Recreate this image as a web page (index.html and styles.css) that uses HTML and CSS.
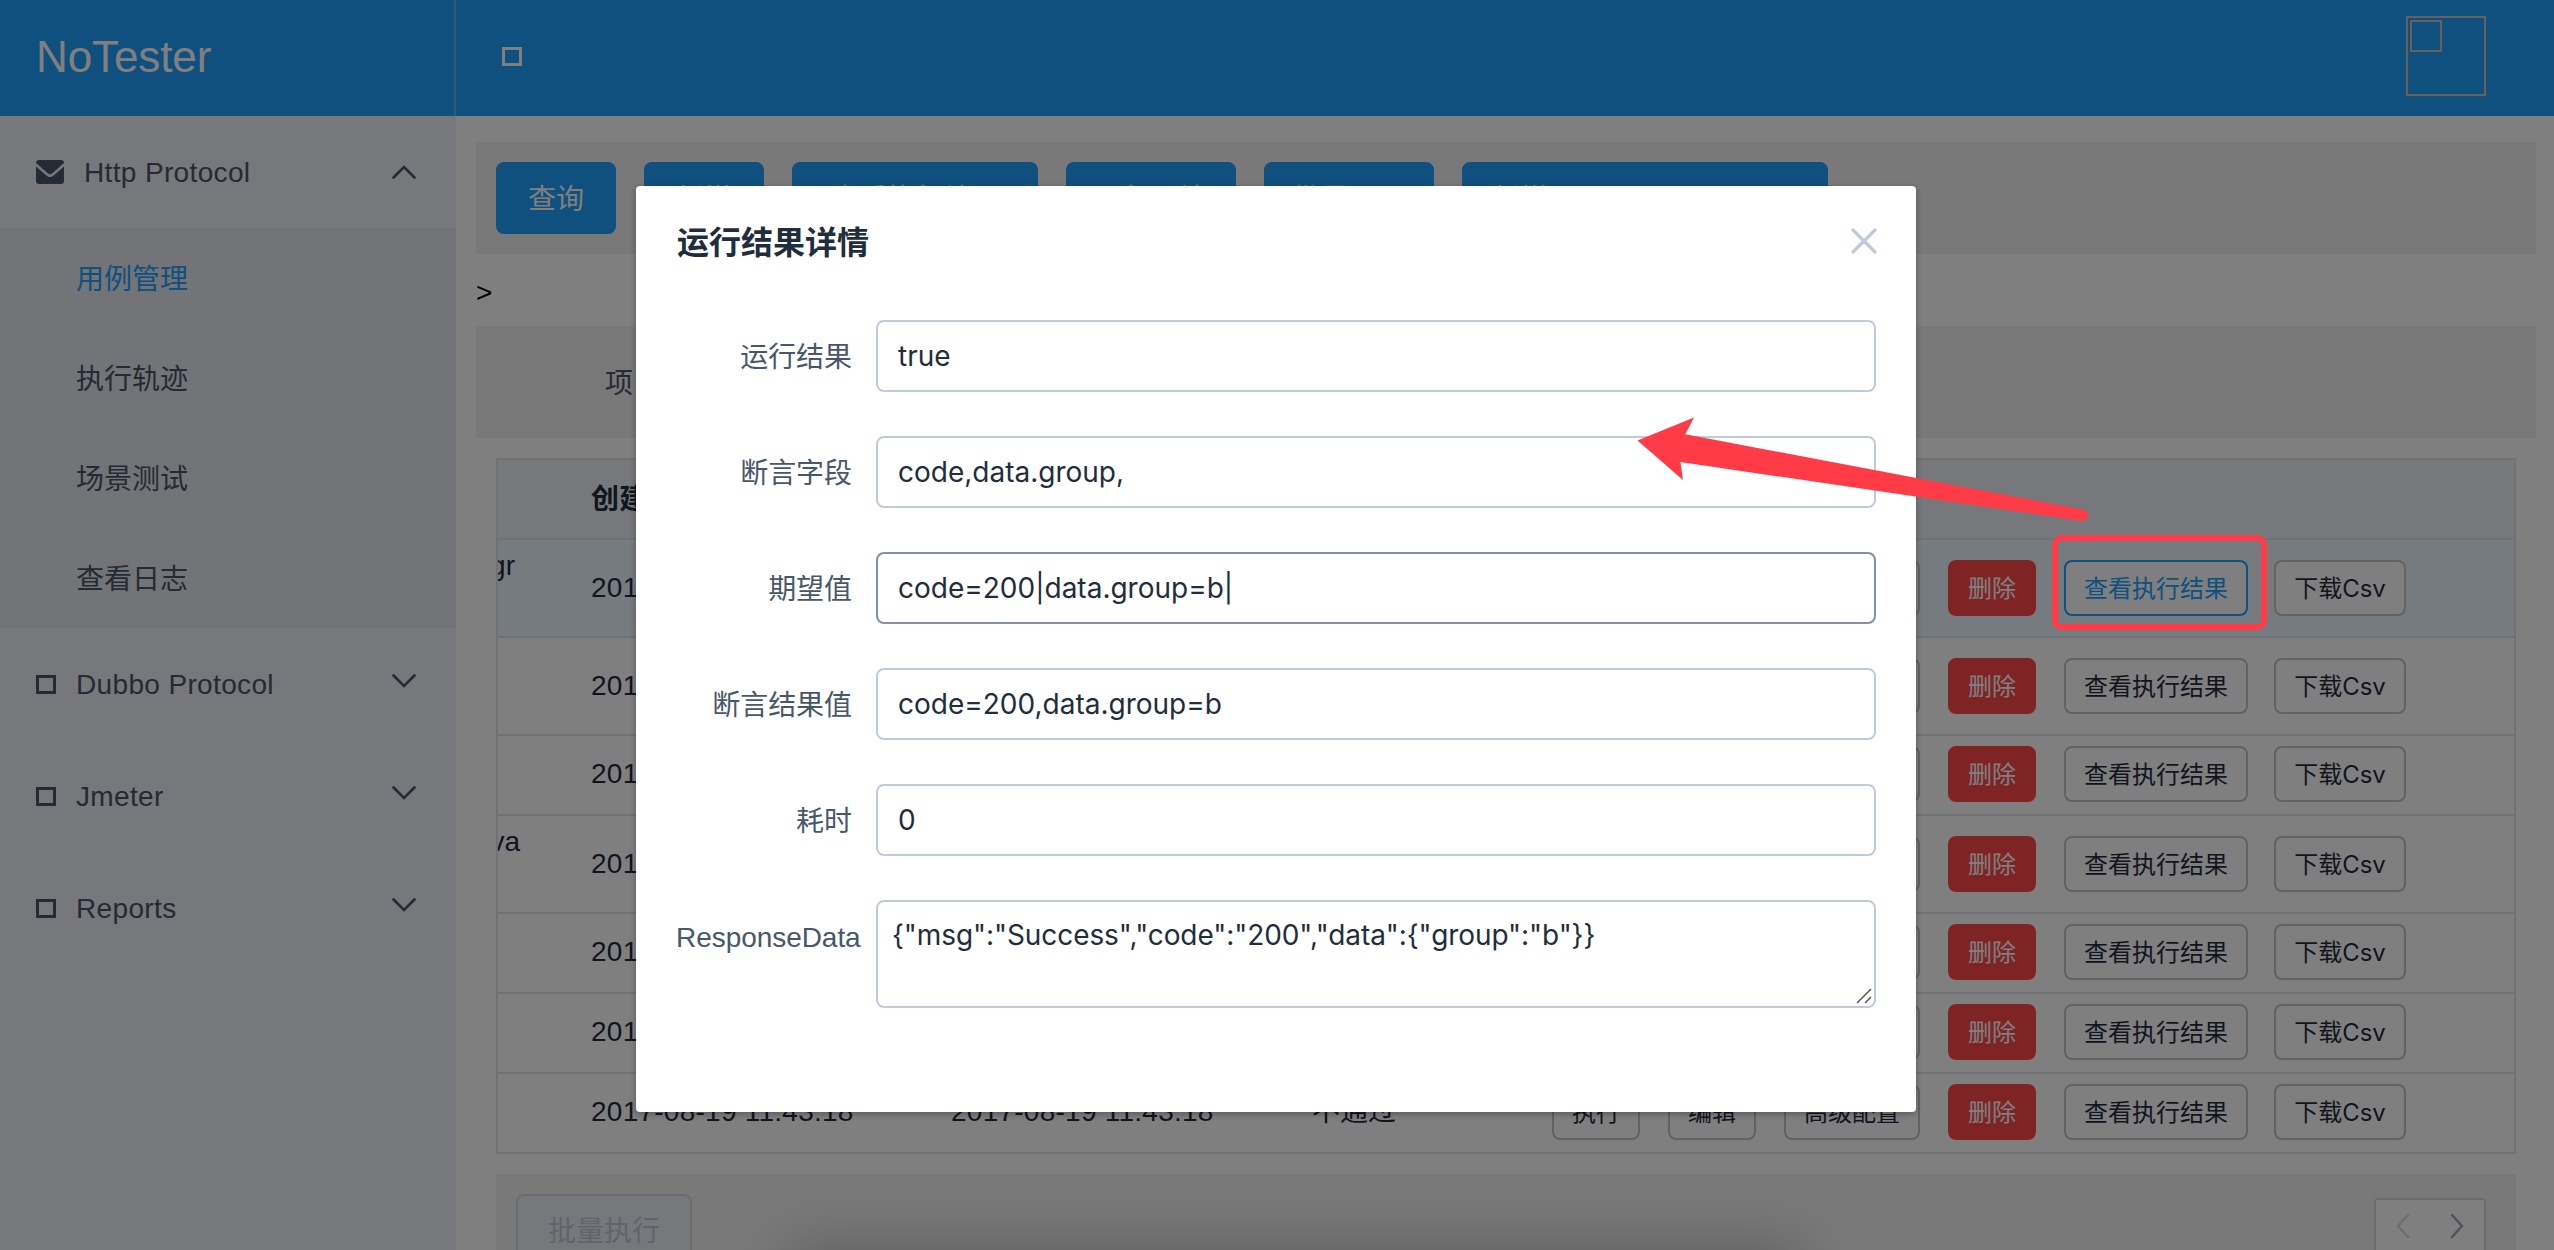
FILE: index.html
```html
<!DOCTYPE html>
<html lang="zh-CN">
<head>
<meta charset="utf-8">
<title>NoTester</title>
<link rel="stylesheet" href="styles.css">
</head>
<body>
<div class="app">
  <header class="header">
    <div class="logo">NoTester</div>
    <div class="header-main">
      <i class="glyph"></i>
      <div class="avatar"><i class="avatar-img"></i></div>
    </div>
  </header>
  <div class="body">
    <nav class="sidebar">
      <div class="menu-item">
        <svg class="mail" width="28" height="24" viewBox="0 0 28 24"><path d="M3 0h22q3 0 3 3L16 13.500q-2 1.500-4 0L0 3q0-3 3-3zM0 6.500l11 9.500q3 2 6 0l11-9.500V21q0 3-3 3H3q-3 0-3-3z" fill="currentColor"/></svg>
        <span class="menu-title first">Http Protocol</span>
        <svg class="chev" width="24" height="14" viewBox="0 0 24 14"><path d="M1.500 12.500L12 2l10.500 10.500"/></svg>
      </div>
      <ul class="submenu">
        <li class="active">用例管理</li>
        <li>执行轨迹</li>
        <li>场景测试</li>
        <li>查看日志</li>
      </ul>
      <div class="menu-item"><i class="glyph"></i><span class="menu-title">Dubbo Protocol</span><svg class="chev down" width="24" height="14" viewBox="0 0 24 14"><path d="M1.500 1.500L12 12 22.500 1.500"/></svg></div>
      <div class="menu-item"><i class="glyph"></i><span class="menu-title">Jmeter</span><svg class="chev down" width="24" height="14" viewBox="0 0 24 14"><path d="M1.500 1.500L12 12 22.500 1.500"/></svg></div>
      <div class="menu-item"><i class="glyph"></i><span class="menu-title">Reports</span><svg class="chev down" width="24" height="14" viewBox="0 0 24 14"><path d="M1.500 1.500L12 12 22.500 1.500"/></svg></div>
    </nav>
    <main class="content">
      <div class="toolbar">
        <button class="btn primary w120">查询</button>
        <button class="btn primary w120">新增</button>
        <button class="btn primary w246">查看执行结果</button>
        <button class="btn primary w170">运行环境</button>
        <button class="btn primary w170">批量导入</button>
        <button class="btn primary w366">新增Http Protocol Case</button>
      </div>
      <div class="crumb">&gt;</div>
      <div class="toolbar filter"><span class="filter-label">项目</span></div>
      <div class="table">
        <div class="row head"><span class="c-name"></span><span class="c-time">创建时间</span><span class="c-time">修改时间</span><span class="c-state">状态</span><span class="c-ops">操作</span></div>
        <div class="row tall current"><span class="c-name"><b>gr</b></span><span class="c-time">2017-08-19 11:43:18</span><span class="c-time">2017-08-19 11:43:18</span><span class="c-state">通过</span><span class="c-ops"><button class="sm">执行</button><button class="sm">编辑</button><button class="sm">高级配置</button><button class="sm danger">删除</button><button class="sm hover">查看执行结果</button><button class="sm csv">下载Csv</button></span></div>
        <div class="row tall"><span class="c-name"></span><span class="c-time">2017-08-19 11:43:18</span><span class="c-time">2017-08-19 11:43:18</span><span class="c-state">不通过</span><span class="c-ops"><button class="sm">执行</button><button class="sm">编辑</button><button class="sm">高级配置</button><button class="sm danger">删除</button><button class="sm">查看执行结果</button><button class="sm csv">下载Csv</button></span></div>
        <div class="row"><span class="c-name"></span><span class="c-time">2017-08-19 11:43:18</span><span class="c-time">2017-08-19 11:43:18</span><span class="c-state">不通过</span><span class="c-ops"><button class="sm">执行</button><button class="sm">编辑</button><button class="sm">高级配置</button><button class="sm danger">删除</button><button class="sm">查看执行结果</button><button class="sm csv">下载Csv</button></span></div>
        <div class="row tall"><span class="c-name"><b class="va">va</b></span><span class="c-time">2017-08-19 11:43:18</span><span class="c-time">2017-08-19 11:43:18</span><span class="c-state">不通过</span><span class="c-ops"><button class="sm">执行</button><button class="sm">编辑</button><button class="sm">高级配置</button><button class="sm danger">删除</button><button class="sm">查看执行结果</button><button class="sm csv">下载Csv</button></span></div>
        <div class="row"><span class="c-name"></span><span class="c-time">2017-08-19 11:43:18</span><span class="c-time">2017-08-19 11:43:18</span><span class="c-state">不通过</span><span class="c-ops"><button class="sm">执行</button><button class="sm">编辑</button><button class="sm">高级配置</button><button class="sm danger">删除</button><button class="sm">查看执行结果</button><button class="sm csv">下载Csv</button></span></div>
        <div class="row"><span class="c-name"></span><span class="c-time">2017-08-19 11:43:18</span><span class="c-time">2017-08-19 11:43:18</span><span class="c-state">不通过</span><span class="c-ops"><button class="sm">执行</button><button class="sm">编辑</button><button class="sm">高级配置</button><button class="sm danger">删除</button><button class="sm">查看执行结果</button><button class="sm csv">下载Csv</button></span></div>
        <div class="row"><span class="c-name"></span><span class="c-time">2017-08-19 11:43:18</span><span class="c-time">2017-08-19 11:43:18</span><span class="c-state">不通过</span><span class="c-ops"><button class="sm">执行</button><button class="sm">编辑</button><button class="sm">高级配置</button><button class="sm danger">删除</button><button class="sm">查看执行结果</button><button class="sm csv">下载Csv</button></span></div>
      </div>
      <div class="footer">
        <button class="btn disabled">批量执行</button>
        <div class="pager">
          <svg class="prev" width="14" height="26" viewBox="0 0 14 26"><path d="M12 2L2 13l10 11"/></svg>
          <svg class="next" width="14" height="26" viewBox="0 0 14 26"><path d="M2 2l10 11L2 24"/></svg>
        </div>
      </div>
    </main>
  </div>
</div>

<div class="mask">
  <section class="dialog">
    <div class="dialog-head">
      <h2>运行结果详情</h2>
      <svg width="26" height="26" viewBox="0 0 26 26"><path d="M2 2l22 22M24 2L2 24"/></svg>
    </div>
    <div class="field"><label>运行结果</label><div class="input">true</div></div>
    <div class="field"><label>断言字段</label><div class="input">code,data.group,</div></div>
    <div class="field"><label>期望值</label><div class="input hovered">code=200|data.group=b|</div></div>
    <div class="field"><label>断言结果值</label><div class="input">code=200,data.group=b</div></div>
    <div class="field"><label>耗时</label><div class="input">0</div></div>
    <div class="field"><label>ResponseData</label><div class="input area">{"msg":"Success","code":"200","data":{"group":"b"}}
      <svg class="grip" width="16" height="16" viewBox="0 0 16 16"><path d="M1 15L15 1M9 15l6-6"/></svg></div></div>
  </section>
</div>
<div class="dock"><div class="dock-shadow"></div></div>
<div class="highlight"></div>
<svg class="arrow" width="452" height="106" viewBox="1637 417 452 106"><path d="M1637.500 440.400L1694 417.500 1685.300 434.300 2083 509.600Q2088 511 2088 515 2087 521 2082 521L1680.400 462 1683 480z"/></svg>
</body>
</html>
```
FILE: styles.css
```css
* { box-sizing: border-box; }
body {
  margin: 0;
  width: 2554px;
  height: 1250px;
  overflow: hidden;
  position: relative;
  background: #fff;
  color: #1f2d3d;
  font: 28px/1.4 "Liberation Sans", "Noto Sans CJK SC", sans-serif;
}
button { font-family: Inter, "Noto Sans CJK SC", sans-serif; }
.app { height: 1250px; overflow: hidden; }

.header { display: flex; height: 116px; background: #20a0ff; color: #fff; }
.logo {
  width: 456px;
  padding-left: 36px;
  border-right: 2px solid rgba(238, 241, 146, .3);
  font-size: 44px;
  line-height: 114px;
  letter-spacing: -.1px;
}
.header-main { flex: 1; display: flex; align-items: flex-start; justify-content: space-between; padding: 0 68px 0 46px; }
.glyph { display: block; width: 20px; height: 19px; border: 3px solid currentColor; }
.header-main .glyph { margin-top: 47px; }
.avatar { width: 80px; height: 80px; margin-top: 16px; padding: 2px; border: 2px solid #cac3bf; }
.avatar-img { display: block; width: 32px; height: 32px; border: 2px solid #cac3bf; }

.body { display: flex; height: 1134px; overflow: hidden; }
.sidebar { width: 456px; background: #eef1f6; color: #48576a; }
.menu-item { display: flex; align-items: center; height: 112px; padding: 0 40px 0 36px; }
.menu-title { flex: 1; margin-left: 20px; padding-top: 2px; letter-spacing: .35px; }
.chev { fill: none; stroke: currentColor; stroke-width: 2.600; stroke-linecap: round; }
.chev.down { margin-top: -6px; }
.submenu { margin: 0; padding: 0; list-style: none; background: #e4e8f1; }
.submenu li { height: 100px; padding-left: 76px; line-height: 103px; }
.submenu .active { color: #20a0ff; }

.content { flex: 1; padding: 26px 18px 0 20px; }
.toolbar { display: flex; gap: 28px; height: 112px; padding: 20px; background: #f2f2f2; }
.btn {
  height: 72px;
  padding: 0 0 3px;
  border: 2px solid #20a0ff;
  border-radius: 8px;
  font-size: 28px;
  white-space: nowrap;
}
.primary { background: #20a0ff; color: #fff; }
.w120 { width: 120px; }
.w246 { width: 246px; }
.w170 { width: 170px; }
.w366 { width: 366px; }
.crumb { height: 72px; line-height: 78px; color: #000; }
.filter-label { margin-left: 109px; line-height: 75px; color: #48576a; }

.table { margin: 20px 20px 0; border: 2px solid #dfe6ec; border-bottom: 0; overflow: hidden; }
.row { display: flex; align-items: center; height: 80px; padding-bottom: 2px; border-bottom: 2px solid #dfe6ec; }
.row.tall { height: 98px; padding-bottom: 0; }
.row.head { background: #eef1f6; font-weight: bold; padding: 2px 0 0; }
.row.current { background: #edf7ff; }
.c-name { display: flex; justify-content: flex-end; width: 58px; height: 78px; padding-right: 41px; white-space: nowrap; }
.c-name b { font-weight: normal; line-height: 34px; }
.c-name .va { margin-right: -5px; }
.c-time { width: 360px; padding-left: 35px; letter-spacing: .25px; }
.c-state { width: 240px; padding-left: 36px; }
.c-ops { display: flex; gap: 28px; flex: 1; padding-left: 36px; }
.sm {
  height: 56px;
  padding: 0 18px 3px;
  border: 2px solid #c4c4c4;
  border-radius: 8px;
  background: #fff;
  color: #1f2d3d;
  font-size: 24px;
  white-space: nowrap;
}
.sm.danger { border-color: #ff4949; background: #ff4949; color: #fff; }
.sm.hover { border-color: #20a0ff; color: #20a0ff; }
.sm.csv { width: 132px; margin-left: -2px; padding: 0 0 3px; }

.footer { display: flex; justify-content: space-between; align-items: flex-start; height: 116px; margin: 20px 20px 0; padding: 20px 30px 0 20px; background: #f2f2f2; }
.btn.disabled { width: 176px; border-color: #d1dbe5; background: #eef1f6; color: #bfcbd9; }
.pager { display: flex; align-items: center; justify-content: space-between; width: 112px; height: 56px; margin-top: 4px; padding: 0 20px; border: 2px solid #d1dbe5; border-radius: 4px; background: #fff; }
.pager svg { fill: none; stroke-width: 2.500; stroke: #97a8be; stroke-linecap: round; }
.pager .prev { stroke: #dcdcdc; }

.mask { position: absolute; inset: 0; padding-top: 186px; background: rgba(0, 0, 0, .5); }
.dialog { width: 1280px; height: 926px; margin-left: 636px; padding: 0 40px; border-radius: 4px; background: #fff; box-shadow: 0 2px 6px rgba(0, 0, 0, .3); }
.dialog-head { display: flex; justify-content: space-between; height: 134px; }
.dialog-head h2 { margin: 0 0 0 1px; font-size: 32px; line-height: 114px; }
.dialog-head svg { margin: 42px -1px 0 0; fill: none; stroke: #bfcbd9; stroke-width: 3.200; stroke-linecap: round; }
.field { display: flex; margin-bottom: 44px; }
.field label { width: 200px; height: 72px; padding-right: 24px; color: #48576a; line-height: 75px; letter-spacing: -.05px; text-align: right; }
.input {
  width: 1000px;
  height: 72px;
  padding: 0 20px;
  border: 2px solid #bfcbd9;
  border-radius: 8px;
  font-family: Inter, sans-serif;
  line-height: 69px;
}
.input.hovered { border-color: #8391a5; }
.input.area { position: relative; height: 108px; padding: 0 14px; line-height: 66px; letter-spacing: -.08px; }
.grip { position: absolute; right: 2px; bottom: 2px; fill: none; stroke: #555; stroke-width: 1.500; }

/* soft shade cast by the system dock along the lower edge */
.dock { position: absolute; left: 0; right: 0; bottom: 0; height: 80px; overflow: hidden; }
.dock-shadow { width: 1010px; height: 120px; margin: 80px 0 0 790px; box-shadow: 0 0 60px rgba(0, 0, 0, .25); }
.highlight { position: absolute; left: 2052px; top: 535px; width: 215px; height: 95px; border: 6px solid #ff3b47; border-radius: 10px; }
.arrow { position: absolute; left: 1637px; top: 417px; fill: #ff3b47; }
```
